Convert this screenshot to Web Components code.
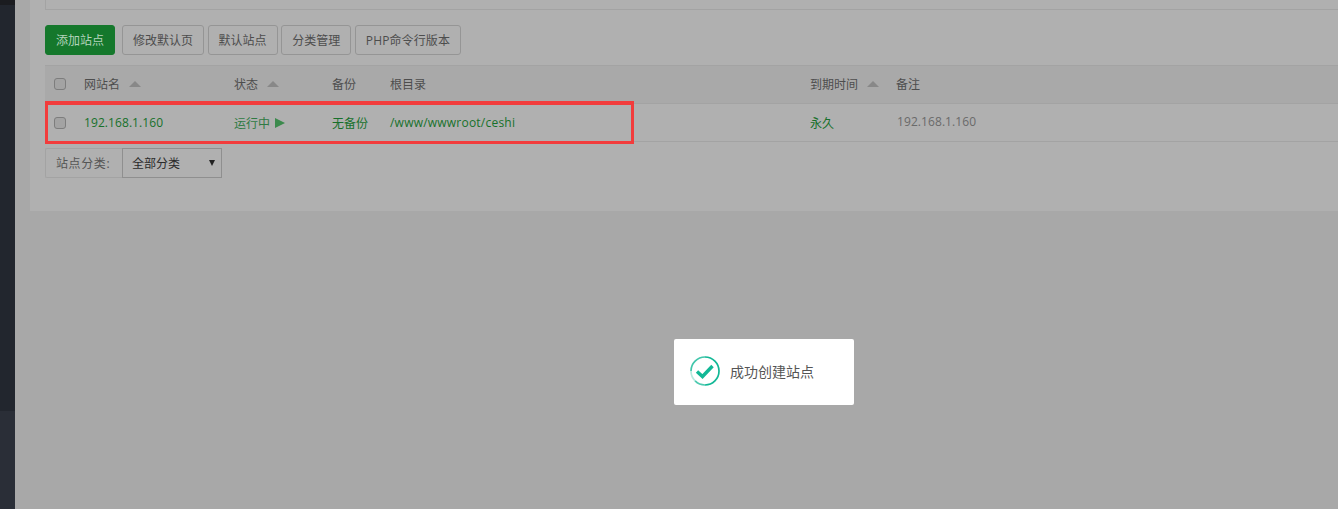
<!DOCTYPE html>
<html lang="zh">
<head>
<meta charset="utf-8">
<title>网站</title>
<style>
  html, body { margin: 0; height: 100%; overflow: hidden; }
  body { font: 12px "Open Sans", "Noto Sans CJK SC", sans-serif; background: #a8a8a8; }
</style>
</head>
<body>
<app-shell>
  <site-panel>
    <tool-bar slot="tools">
      <bt-button primary>添加站点</bt-button>
      <bt-button>修改默认页</bt-button>
      <bt-button>默认站点</bt-button>
      <bt-button>分类管理</bt-button>
      <bt-button style="letter-spacing: .12px">PHP命令行版本</bt-button>
    </tool-bar>
    <site-table slot="table"></site-table>
    <category-filter slot="filter"></category-filter>
  </site-panel>
  <toast-message>成功创建站点</toast-message>
</app-shell>

<script>
class AppShell extends HTMLElement {
  constructor () {
    super()
    const shadow = this.attachShadow({ mode: 'open' })
    shadow.innerHTML = `
      <style>
        :host { display: flex; height: 509px; width: 1338px; position: relative; overflow: hidden; }
        .side { width: 15px; flex: none; display: flex; flex-direction: column; background: #22262e; }
        .side .top { height: 5px; background: #1b1c20; }
        .side .fill { flex: 1; }
        .side .low { height: 98px; background: #2a2e37; }
        main { flex: 1; min-width: 0; padding-left: 15px; }
      </style>
      <div class="side"><div class="top"></div><div class="fill"></div><div class="low"></div></div>
      <main><slot></slot></main>
    `
  }
}

class SitePanel extends HTMLElement {
  constructor () {
    super()
    const shadow = this.attachShadow({ mode: 'open' })
    shadow.innerHTML = `
      <style>
        :host { display: block; background: #b0b0b0; height: 211px; padding: 0 0 0 15px; box-sizing: border-box; }
        .top-box { height: 10px; box-sizing: border-box; border: 1px solid #a3a3a3; border-top: 0; border-right: 0; }
        .tools { padding: 15px 0 10px; }
      </style>
      <div class="top-box"></div>
      <div class="tools"><slot name="tools"></slot></div>
      <slot name="table"></slot>
      <slot name="filter"></slot>
    `
  }
}

class ToolBar extends HTMLElement {
  constructor () {
    super()
    const shadow = this.attachShadow({ mode: 'open' })
    shadow.innerHTML = `
      <style>
        :host { display: flex; gap: 3.6px; height: 30px; }
        ::slotted([primary]) { margin-right: 3.4px; }
      </style>
      <slot></slot>
    `
  }
}

class BtButton extends HTMLElement {
  constructor () {
    super()
    const shadow = this.attachShadow({ mode: 'open' })
    shadow.innerHTML = `
      <style>
        :host { display: inline-flex; align-items: center; box-sizing: border-box; height: 30px; padding: 0 10px;
          border: 1px solid #959595; border-radius: 3px; color: #4d4d4d; background: #b0b0b0; }
        :host([primary]) { background: #15782c; border-color: #15782c; color: #b4d4bc; }
      </style>
      <slot></slot>
    `
  }
}

const CHECK = '<span class="check"></span>'
const CARET = '<svg class="caret" width="12" height="6" viewBox="0 0 12 6"><path d="M0 6 6 0l6 6z" fill="#888"/></svg>'

class SiteTable extends HTMLElement {
  constructor () {
    super()
    const shadow = this.attachShadow({ mode: 'open' })
    shadow.innerHTML = `
      <style>
        :host { display: block; position: relative; }
        .row { display: grid; grid-template-columns: 39px 150px 98px 58px 420px 86px 1fr; align-items: center;
          border-bottom: 1px solid #a3a3a3; box-sizing: border-box; }
        .head { height: 39px; padding-bottom: 2px; background: #a9a9a9; border-top: 1px solid #a3a3a3; color: #4d4d4d; }
        .body { height: 38px; color: #17702b; }
        .cell { display: flex; align-items: center; gap: 6px; white-space: nowrap; }
        .cell.first { padding-left: 9px; }
        .head .caret { margin-left: 3px; }
        .ip { letter-spacing: .08px; }
        .path { letter-spacing: .22px; }
        .status { color: #2f7a43; }
        .note { color: #6a6a6a; padding: 0 0 2px 1px; letter-spacing: .08px; }
        .check { width: 10px; height: 10px; border: 1px solid #7d7d7d; border-radius: 3px; background: #a3a3a3; }
        .play { width: 0; height: 0; border-left: 10px solid #3c8a4d; border-top: 5px solid transparent; border-bottom: 5px solid transparent; margin-left: -1px; }
        .mark { position: absolute; left: 0; top: 36px; width: 589px; height: 43px; box-sizing: border-box;
          border: solid #f23c3c; border-width: 4px 3px 3px; }
      </style>
      <div class="row head">
        <div class="cell first">${CHECK}</div>
        <div class="cell">网站名 ${CARET}</div>
        <div class="cell">状态 ${CARET}</div>
        <div class="cell">备份</div>
        <div class="cell">根目录</div>
        <div class="cell">到期时间 ${CARET}</div>
        <div class="cell">备注</div>
      </div>
      <div class="row body">
        <div class="cell first">${CHECK}</div>
        <div class="cell ip">192.168.1.160</div>
        <div class="cell status">运行中 <span class="play"></span></div>
        <div class="cell">无备份</div>
        <div class="cell path">/www/wwwroot/ceshi</div>
        <div class="cell">永久</div>
        <div class="cell note">192.168.1.160</div>
      </div>
      <div class="mark"></div>
    `
  }
}

class CategoryFilter extends HTMLElement {
  constructor () {
    super()
    const shadow = this.attachShadow({ mode: 'open' })
    shadow.innerHTML = `
      <style>
        :host { display: flex; width: 177px; height: 30px; margin-top: 6px; box-sizing: border-box; color: #555; }
        .label { width: 77px; box-sizing: border-box; display: flex; align-items: center; padding-left: 10px; letter-spacing: .6px;
          border: 1px solid #a3a3a3; border-right: 0; border-radius: 2px 0 0 2px; }
        .select { flex: 1; box-sizing: border-box; display: flex; align-items: center; justify-content: space-between;
          padding: 0 6px 0 9px; border: 1px solid #8f8f8f; color: #2b2b2b; }
      </style>
      <div class="label">站点分类:</div>
      <div class="select"><span>全部分类</span><svg width="6" height="6" viewBox="0 0 6 6"><path d="M0 0h6L3 6z" fill="#222"/></svg></div>
    `
  }
}

class ToastMessage extends HTMLElement {
  constructor () {
    super()
    const shadow = this.attachShadow({ mode: 'open' })
    shadow.innerHTML = `
      <style>
        :host { position: absolute; left: 674px; top: 339px; width: 180px; height: 66px; box-sizing: border-box; background: #fff;
          border-radius: 2px; display: flex; align-items: center; gap: 10px; padding: 0 0 2px 16px; color: #555; font-size: 14px; }
      </style>
      <svg width="30" height="30" viewBox="0 0 30 30" fill="none">
        <path d="M15 1a14 14 0 0 1 0 28" stroke="#12b896" stroke-width="1.7"/>
        <path d="M15 29a14 14 0 0 1-9.9-4.1" stroke="#12b896" stroke-width="1.7" opacity=".75"/>
        <path d="M5.1 24.9A14 14 0 0 1 1 15" stroke="#12b896" stroke-width="1.7" opacity=".3"/>
        <path d="M1 15A14 14 0 0 1 15 1" stroke="#12b896" stroke-width="1.7" opacity=".8"/>
        <path d="M7 15.5l5.5 5 10-10.5" stroke="#12b896" stroke-width="3.4"/>
      </svg>
      <slot></slot>
    `
  }
}

customElements.define('app-shell', AppShell)
customElements.define('site-panel', SitePanel)
customElements.define('tool-bar', ToolBar)
customElements.define('bt-button', BtButton)
customElements.define('site-table', SiteTable)
customElements.define('category-filter', CategoryFilter)
customElements.define('toast-message', ToastMessage)
</script>
</body>
</html>
